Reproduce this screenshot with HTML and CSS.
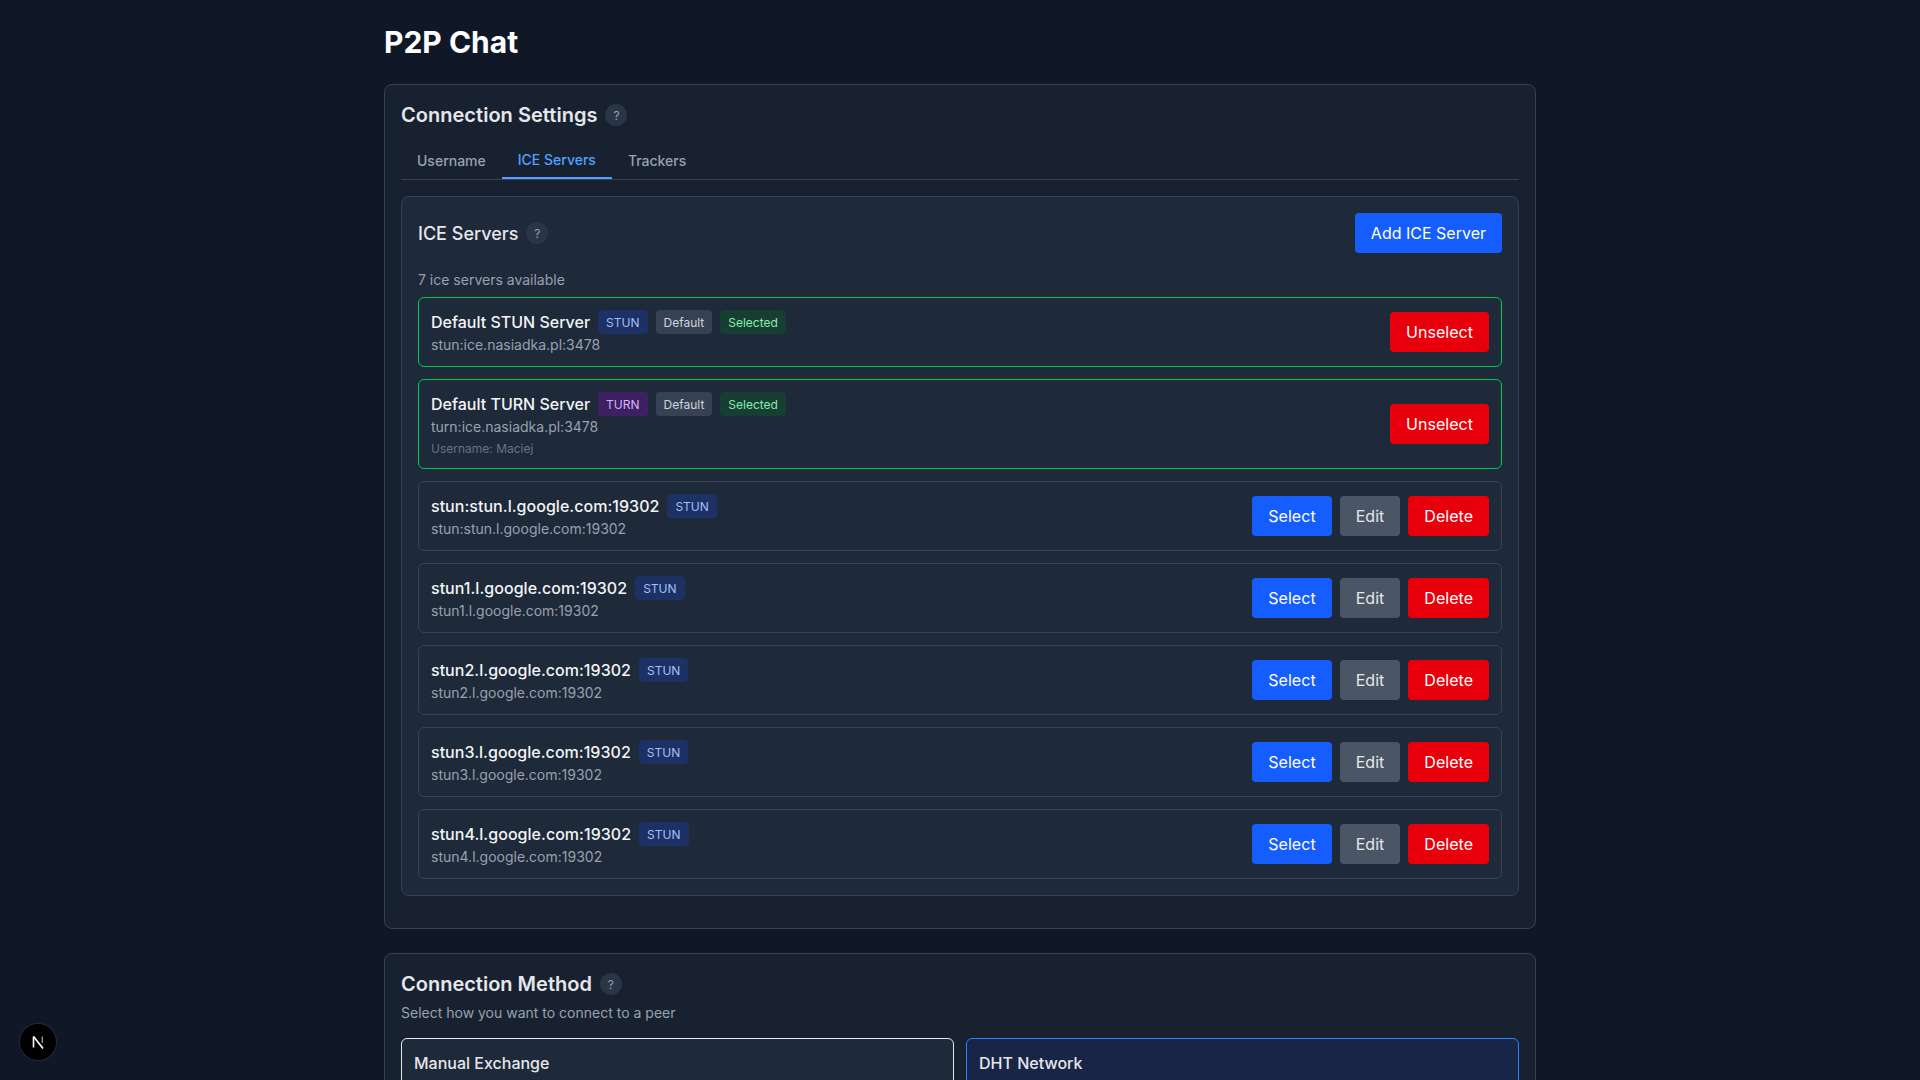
FILE: index.html
```html
<!DOCTYPE html>
<html lang="en">
<head>
<meta charset="utf-8">
<title>P2P Chat</title>
<link rel="stylesheet" href="styles.css">
</head>
<body>
<main class="page">
  <h1 class="page-title">P2P Chat</h1>

  <section class="card">
    <div class="heading-row heading-row-settings">
      <h2 class="card-title">Connection Settings</h2>
      <span class="help">?</span>
    </div>
    <div class="tabs">
      <button class="tab">Username</button>
      <button class="tab tab-active">ICE Servers</button>
      <button class="tab">Trackers</button>
    </div>

    <div class="panel">
      <div class="panel-head">
        <div class="heading-row">
          <h3 class="panel-title">ICE Servers</h3>
          <span class="help">?</span>
        </div>
        <button class="btn btn-blue btn-add">Add ICE Server</button>
      </div>
      <p class="count">7 ice servers available</p>
      <ul class="server-list">
        <li class="server server-selected">
          <div class="server-info">
            <div class="server-name-row">
              <span class="server-name">Default STUN Server</span>
              <span class="tag tag-stun">STUN</span>
              <span class="tag tag-default">Default</span>
              <span class="tag tag-selected">Selected</span>
            </div>
            <div class="server-url">stun:ice.nasiadka.pl:3478</div>
          </div>
          <div class="server-actions"><button class="btn btn-red">Unselect</button></div>
        </li>
        <li class="server server-selected">
          <div class="server-info">
            <div class="server-name-row">
              <span class="server-name">Default TURN Server</span>
              <span class="tag tag-turn">TURN</span>
              <span class="tag tag-default">Default</span>
              <span class="tag tag-selected">Selected</span>
            </div>
            <div class="server-url">turn:ice.nasiadka.pl:3478</div>
            <div class="server-user">Username: Maciej</div>
          </div>
          <div class="server-actions"><button class="btn btn-red">Unselect</button></div>
        </li>
        <li class="server">
          <div class="server-info">
            <div class="server-name-row">
              <span class="server-name">stun:stun.l.google.com:19302</span>
              <span class="tag tag-stun">STUN</span>
            </div>
            <div class="server-url">stun:stun.l.google.com:19302</div>
          </div>
          <div class="server-actions">
            <button class="btn btn-blue">Select</button>
            <button class="btn btn-gray">Edit</button>
            <button class="btn btn-red">Delete</button>
          </div>
        </li>
        <li class="server">
          <div class="server-info">
            <div class="server-name-row">
              <span class="server-name">stun1.l.google.com:19302</span>
              <span class="tag tag-stun">STUN</span>
            </div>
            <div class="server-url">stun1.l.google.com:19302</div>
          </div>
          <div class="server-actions">
            <button class="btn btn-blue">Select</button>
            <button class="btn btn-gray">Edit</button>
            <button class="btn btn-red">Delete</button>
          </div>
        </li>
        <li class="server">
          <div class="server-info">
            <div class="server-name-row">
              <span class="server-name">stun2.l.google.com:19302</span>
              <span class="tag tag-stun">STUN</span>
            </div>
            <div class="server-url">stun2.l.google.com:19302</div>
          </div>
          <div class="server-actions">
            <button class="btn btn-blue">Select</button>
            <button class="btn btn-gray">Edit</button>
            <button class="btn btn-red">Delete</button>
          </div>
        </li>
        <li class="server">
          <div class="server-info">
            <div class="server-name-row">
              <span class="server-name">stun3.l.google.com:19302</span>
              <span class="tag tag-stun">STUN</span>
            </div>
            <div class="server-url">stun3.l.google.com:19302</div>
          </div>
          <div class="server-actions">
            <button class="btn btn-blue">Select</button>
            <button class="btn btn-gray">Edit</button>
            <button class="btn btn-red">Delete</button>
          </div>
        </li>
        <li class="server">
          <div class="server-info">
            <div class="server-name-row">
              <span class="server-name">stun4.l.google.com:19302</span>
              <span class="tag tag-stun">STUN</span>
            </div>
            <div class="server-url">stun4.l.google.com:19302</div>
          </div>
          <div class="server-actions">
            <button class="btn btn-blue">Select</button>
            <button class="btn btn-gray">Edit</button>
            <button class="btn btn-red">Delete</button>
          </div>
        </li>
      </ul>
    </div>
  </section>

  <section class="card">
    <div class="heading-row">
      <h2 class="card-title">Connection Method</h2>
      <span class="help">?</span>
    </div>
    <p class="card-desc">Select how you want to connect to a peer</p>
    <div class="methods">
      <div class="method method-manual">Manual Exchange</div>
      <div class="method method-dht">DHT Network</div>
    </div>
  </section>
</main>

<div class="next-badge">
  <svg class="next-logo" viewBox="0 0 36 36" width="36" height="36" aria-hidden="true">
    <path d="M13.5 12.5V23.5" stroke="#fff" stroke-width="1.6" fill="none"/>
    <path d="M13.5 12.5L23 24.5" stroke="#fff" stroke-width="1.7" fill="none"/>
    <path d="M22.3 12.5V19" stroke="#999" stroke-width="1.4" fill="none"/>
  </svg>
</div>
</body>
</html>
```

FILE: styles.css
```css
* {
  box-sizing: border-box;
}

html,
body {
  margin: 0;
  padding: 0;
  height: 1080px;
  overflow: hidden;
}

body {
  background: #101828;
  color: #e5e7eb;
  font-family: Inter, "Liberation Sans", sans-serif;
  font-size: 16px;
  line-height: 24px;
}

h1, h2, h3, p, ul {
  margin: 0;
  padding: 0;
}

button {
  font-family: inherit;
}

.page {
  width: 1152px;
  margin: 0 auto;
  padding-top: 24px;
}

.page-title {
  font-size: 30px;
  line-height: 36px;
  font-weight: 700;
  color: #fff;
  margin-bottom: 24px;
}

.card {
  background: #182130;
  border: 1px solid #364153;
  border-radius: 8px;
  padding: 16px;
  margin-bottom: 24px;
}

.heading-row {
  display: flex;
  align-items: center;
  gap: 8px;
}

.heading-row-settings {
  margin-bottom: 12px;
}

.heading-row-settings .card-title {
  letter-spacing: 0.03px;
}

.card-title {
  font-size: 20px;
  line-height: 28px;
  font-weight: 600;
  color: #e5e7eb;
}

.help {
  width: 22px;
  height: 22px;
  border-radius: 50%;
  background: #2a3546;
  color: #99a1af;
  font-size: 12px;
  line-height: 23px;
  text-align: center;
  flex: none;
}

.tabs {
  display: flex;
  border-bottom: 1px solid #364153;
  margin-bottom: 16px;
}

.tab {
  height: 38px;
  padding: 2px 16px 0;
  background: none;
  border: 0;
  color: #99a1af;
  font-size: 14px;
  line-height: 20px;
  font-weight: 500;
}

.tab-active {
  color: #51a2ff;
  border-bottom: 2px solid #51a2ff;
}

.panel {
  background: #1e2939;
  border: 1px solid #364153;
  border-radius: 8px;
  padding: 16px;
  margin-bottom: 16px;
}

.panel-head {
  display: flex;
  justify-content: space-between;
  align-items: center;
  margin-bottom: 16px;
}

.panel-title {
  font-size: 18px;
  line-height: 28px;
  font-weight: 500;
  color: #e5e7eb;
  padding-top: 1px;
  margin-bottom: -1px;
}

.count {
  font-size: 14px;
  line-height: 20px;
  color: #99a1af;
  padding-top: 1px;
  margin-bottom: 7px;
}

.server-list {
  list-style: none;
  display: flex;
  flex-direction: column;
  gap: 12px;
}

.server {
  display: flex;
  justify-content: space-between;
  align-items: center;
  padding: 12px;
  border: 1px solid #364153;
  border-radius: 6px;
}

.server-selected {
  border-color: #00c950;
}

.server-name-row {
  display: flex;
  align-items: center;
  gap: 8px;
  height: 24px;
}

.server-name {
  font-weight: 500;
  color: #f3f4f6;
  letter-spacing: 0.03px;
}

.server-selected .server-name {
  letter-spacing: 0;
}

.server-url {
  font-size: 14px;
  line-height: 20px;
  color: #99a1af;
  padding-top: 1px;
  margin-bottom: -1px;
}

.server-user {
  font-size: 12px;
  line-height: 16px;
  margin-top: 4px;
  padding-top: 1px;
  margin-bottom: -1px;
  color: #6a7282;
}

.tag {
  font-size: 12px;
  line-height: 16px;
  padding: 5px 8px 3px;
  border-radius: 4px;
}

.tag-stun {
  background: #1d3164;
  color: #a3bffa;
}

.tag-turn {
  background: #3c2062;
  color: #d8b4fe;
}

.tag-default {
  background: #364153;
  color: #d1d5dc;
}

.tag-selected {
  background: #163e32;
  color: #86efac;
}

.server-actions {
  display: flex;
  gap: 8px;
}

.btn {
  height: 40px;
  padding: 0 16px;
  border: 0;
  border-radius: 4px;
  font-size: 16px;
  line-height: 24px;
  font-weight: 400;
  color: #fff;
  white-space: nowrap;
  letter-spacing: 0.03px;
}

.btn-add {
  letter-spacing: 0;
}

.btn-blue {
  background: #155dfc;
}

.btn-red {
  background: #e7000b;
}

.btn-gray {
  background: #4a5565;
  color: #e5e7eb;
}

.card-desc {
  font-size: 14px;
  line-height: 20px;
  color: #99a1af;
  margin-top: 4px;
  padding-top: 1px;
  margin-bottom: 15px;
}

.methods {
  display: grid;
  grid-template-columns: 1fr 1fr;
  gap: 12px;
}

.method {
  border-radius: 6px;
  padding: 12px;
  height: 90px;
  font-weight: 500;
  color: #e5e7eb;
}

.method-manual {
  background: #1e2939;
  border: 1px solid #e5e7eb;
}

.method-dht {
  background: #192546;
  border: 1px solid #2b7fff;
}

.next-badge {
  position: fixed;
  left: 20px;
  bottom: 20px;
  width: 36px;
  height: 36px;
  border-radius: 50%;
  background: #000;
  box-shadow: 0 0 0 1px rgba(255, 255, 255, 0.08);
}

.next-logo {
  display: block;
}
```
